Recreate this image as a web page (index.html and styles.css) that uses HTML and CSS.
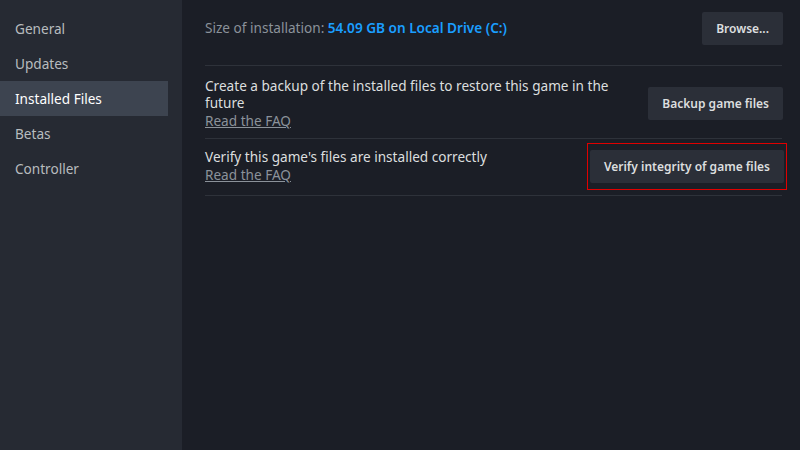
FILE: index.html
```html
<!DOCTYPE html>
<html>
<head>
<meta charset="utf-8">
<link rel="stylesheet" href="styles.css">
</head>
<body>
<div class="app">
  <nav class="sidebar">
    <div class="nav-item">General</div>
    <div class="nav-item">Updates</div>
    <div class="nav-item active">Installed Files</div>
    <div class="nav-item">Betas</div>
    <div class="nav-item">Controller</div>
  </nav>
  <main class="content">
    <div class="row row-size">
      <div class="size">Size of installation: <span class="size-value">54.09 GB on Local Drive (C:)</span></div>
      <button class="btn">Browse...</button>
    </div>
    <div class="row row-backup">
      <div class="desc">
        <div class="text">Create a backup of the installed files to restore this game in the future</div>
        <a class="faq">Read the FAQ</a>
      </div>
      <button class="btn">Backup game files</button>
    </div>
    <div class="row row-verify">
      <div class="desc">
        <div class="text">Verify this game's files are installed correctly</div>
        <a class="faq">Read the FAQ</a>
      </div>
      <div class="highlight"><button class="btn">Verify integrity of game files</button></div>
    </div>
  </main>
</div>
</body>
</html>
```
FILE: styles.css
```css
html, body {
  margin: 0;
  padding: 0;
  width: 800px;
  height: 450px;
  overflow: hidden;
  background: #1b1e26;
  font-family: "Noto Sans", "Open Sans", sans-serif;
}
.app {
  display: flex;
  height: 450px;
}
.sidebar {
  width: 182px;
  flex: none;
  background: #262a33;
  padding-top: 11px;
  box-sizing: border-box;
}
.nav-item {
  width: 168px;
  height: 35px;
  line-height: 35px;
  padding-left: 15px;
  box-sizing: border-box;
  color: #b8bcbf;
  font-size: 13.6px;
}
.nav-item.active {
  background: #3d4450;
  color: #ffffff;
}
.content {
  width: 577px;
  margin-left: 23px;
  display: flex;
  flex-direction: column;
}
.row {
  display: flex;
  justify-content: space-between;
  align-items: center;
  border-bottom: 1px solid #2e323a;
}
.row-size {
  height: 66px;
  align-items: flex-start;
  padding-top: 12px;
  box-sizing: border-box;
}
.size {
  color: #8b929a;
  font-size: 13.6px;
  line-height: 32px;
}
.size-value {
  color: #1a9fff;
  font-weight: 600;
}
.row-backup {
  height: 72px;
}
.row-verify {
  height: 56px;
  align-items: flex-start;
}
.desc {
  color: #dcdedf;
  font-size: 13.6px;
  line-height: 17.5px;
}
.row-backup .desc {
  width: 420px;
  padding-top: 2px;
}
.row-verify .desc {
  padding-top: 9px;
}
.faq {
  display: block;
  color: #8b929a;
  text-decoration: underline;
}
.btn {
  background: #2b2f38;
  color: #dcdedf;
  border: none;
  border-radius: 2px;
  font-family: "Noto Sans", "Open Sans", sans-serif;
  font-size: 12px;
  font-weight: 600;
  height: 33px;
  padding: 0 14px;
  margin-right: -1px;
}
.row-backup .btn {
  margin-top: 3px;
}
.highlight {
  border: 1px solid #e00000;
  padding: 6px 3px 6px 2px;
  margin-right: -5px;
  margin-top: 4px;
}
.highlight .btn {
  display: block;
}
```
